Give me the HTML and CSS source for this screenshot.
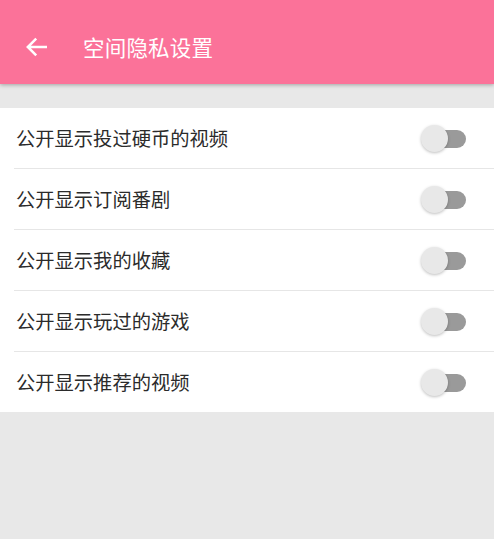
FILE: index.html
```html
<!DOCTYPE html>
<html lang="zh">
<head>
<meta charset="utf-8">
<title>空间隐私设置</title>
<link rel="stylesheet" href="styles.css">
</head>
<body>
<header class="appbar">
  <span class="back">
    <svg width="22" height="20" viewBox="0 0 22 20"><path d="M21 10H2.2M10.2 1.6L1.8 10l8.4 8.4" fill="none" stroke="#fff" stroke-width="2.5"/></svg>
  </span>
  <h1 class="title">空间隐私设置</h1>
</header>
<main class="content">
  <ul class="list">
    <li class="row"><span class="label">公开显示投过硬币的视频</span><span class="switch"><span class="track"></span><span class="thumb"></span></span></li>
    <li class="row"><span class="label">公开显示订阅番剧</span><span class="switch"><span class="track"></span><span class="thumb"></span></span></li>
    <li class="row"><span class="label">公开显示我的收藏</span><span class="switch"><span class="track"></span><span class="thumb"></span></span></li>
    <li class="row"><span class="label">公开显示玩过的游戏</span><span class="switch"><span class="track"></span><span class="thumb"></span></span></li>
    <li class="row"><span class="label">公开显示推荐的视频</span><span class="switch"><span class="track"></span><span class="thumb"></span></span></li>
  </ul>
</main>
</body>
</html>
```
FILE: styles.css
```css
html, body {
  margin: 0;
  padding: 0;
  height: 100%;
}
body {
  background: #e8e8e8;
  font-family: "Noto Sans CJK SC", "Noto Sans", sans-serif;
}
.appbar {
  box-sizing: border-box;
  height: 84px;
  padding-top: 9px;
  background: #fb7299;
  display: flex;
  align-items: center;
  box-shadow: 0 1px 4px rgba(0,0,0,0.3);
  position: relative;
  z-index: 1;
}
.back {
  display: flex;
  width: 22px;
  height: 20px;
  margin-left: 26px;
}
.title {
  margin: 0 0 0 35px;
  font-size: 21.5px;
  font-weight: normal;
  color: #fff;
  line-height: 1;
  letter-spacing: 0.2px;
}
.content {
  padding-top: 24px;
}
.list {
  list-style: none;
  margin: 0;
  padding: 0 0 0 14px;
  background: #fff;
}
.row {
  height: 60px;
  display: flex;
  align-items: center;
  justify-content: space-between;
  border-bottom: 1px solid #e6e6e6;
}
.row:last-child {
  border-bottom: none;
}
.label {
  font-size: 19.3px;
  color: #2b2b2b;
  margin-left: 2px;
  line-height: 1;
  padding-top: 2px;
}
.switch {
  position: relative;
  width: 46px;
  height: 28px;
  margin-right: 28px;
  display: block;
  margin-top: 2px;
}
.track {
  position: absolute;
  right: 0;
  top: 5px;
  width: 36px;
  height: 18px;
  border-radius: 9px;
  background: #9a9a9a;
}
.thumb {
  position: absolute;
  left: 1px;
  top: 0;
  width: 27px;
  height: 27px;
  border-radius: 50%;
  background: #e8e8e8;
  box-shadow: 0 1px 3px rgba(0,0,0,0.25);
}
```
